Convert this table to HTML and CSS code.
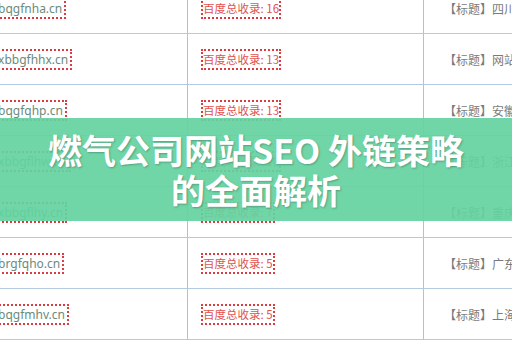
FILE: index.html
```html
<!DOCTYPE html>
<html lang="zh-CN">
<head>
<meta charset="utf-8">
<title>燃气公司网站SEO 外链策略的全面解析</title>
<link rel="stylesheet" href="styles.css">
</head>
<body>
<div class="page">
  <div class="table">
    <div class="row">
      <div class="cell c1"><span class="domain">www.bqgfnha.cn</span></div>
      <div class="cell c2"><span class="count">百度总收录: 16</span></div>
      <div class="cell c3"><span class="title">【标题】四川新闻网站建设</span></div>
    </div>
    <div class="row">
      <div class="cell c1"><span class="domain">www.xbbgfhhx.cn</span></div>
      <div class="cell c2"><span class="count">百度总收录: 13</span></div>
      <div class="cell c3"><span class="title">【标题】网站建设优化</span></div>
    </div>
    <div class="row">
      <div class="cell c1"><span class="domain">www.bqgfqhp.cn</span></div>
      <div class="cell c2"><span class="count">百度总收录: 13</span></div>
      <div class="cell c3"><span class="title">【标题】安徽新闻网站</span></div>
    </div>
    <div class="row">
      <div class="cell c1"><span class="domain">www.xbbgflhw.cn</span></div>
      <div class="cell c2"><span class="count">百度总收录: 10</span></div>
      <div class="cell c3"><span class="title">【标题】浙江新闻网站</span></div>
    </div>
    <div class="row">
      <div class="cell c1"><span class="domain">www.xbbgflhy.cn</span></div>
      <div class="cell c2"><span class="count">百度总收录: 7</span></div>
      <div class="cell c3"><span class="title">【标题】重庆新闻网站</span></div>
    </div>
    <div class="row">
      <div class="cell c1"><span class="domain">www.brgfqho.cn</span></div>
      <div class="cell c2"><span class="count">百度总收录: 5</span></div>
      <div class="cell c3"><span class="title">【标题】广东新闻网站</span></div>
    </div>
    <div class="row">
      <div class="cell c1"><span class="domain">www.bqgfmhv.cn</span></div>
      <div class="cell c2"><span class="count">百度总收录: 5</span></div>
      <div class="cell c3"><span class="title">【标题】上海新闻网站</span></div>
    </div>
  </div>
  <div class="banner">
    <h1 class="banner-title">燃气公司网站SEO 外链策略<br>的全面解析</h1>
  </div>
</div>
</body>
</html>
```
FILE: styles.css
```css
html, body {
  margin: 0;
  padding: 0;
  background: #ffffff;
}

.page {
  position: relative;
  width: 512px;
  height: 340px;
  overflow: hidden;
  font-family: "Noto Sans", "Noto Sans CJK SC", sans-serif;
  font-size: 12px;
}

.table {
  margin-top: -17px;
  margin-left: -51px;
  width: 700px;
}

.row {
  display: grid;
  grid-template-columns: 238px 236px 1fr;
  height: 50px;
  border-bottom: 1px solid #b3cae2;
}

.cell {
  display: flex;
  align-items: center;
  padding-left: 14px;
  white-space: nowrap;
  overflow: hidden;
}

.c2 {
  padding-left: 13px;
  border-left: 1px solid #a3c4e8;
}

.c3 {
  padding-left: 20px;
  border-left: 1px solid #a3c4e8;
}

.domain,
.count {
  display: inline-block;
  line-height: 15px;
  padding: 1px 2px;
  border: 2px dotted #dd3b3f;
}

.domain {
  color: #6b8a7c;
}

.count {
  padding: 1px 0;
  font-size: 11.5px;
  color: #e0534f;
  font-family: "Noto Sans CJK SC", sans-serif;
}

.title {
  color: #7a7a7a;
  font-family: "Noto Sans CJK SC", sans-serif;
}

.banner {
  position: absolute;
  left: 0;
  top: 118px;
  width: 512px;
  height: 103px;
  background: rgba(100, 210, 160, 0.92);
  display: flex;
  align-items: center;
  justify-content: center;
}

.banner-title {
  margin: 0;
  color: #ffffff;
  font-family: "Noto Sans CJK SC", sans-serif;
  font-weight: 700;
  font-size: 34px;
  line-height: 40px;
  text-align: center;
  text-shadow: 1px 1px 2px rgba(0, 0, 0, 0.25);
}
```
